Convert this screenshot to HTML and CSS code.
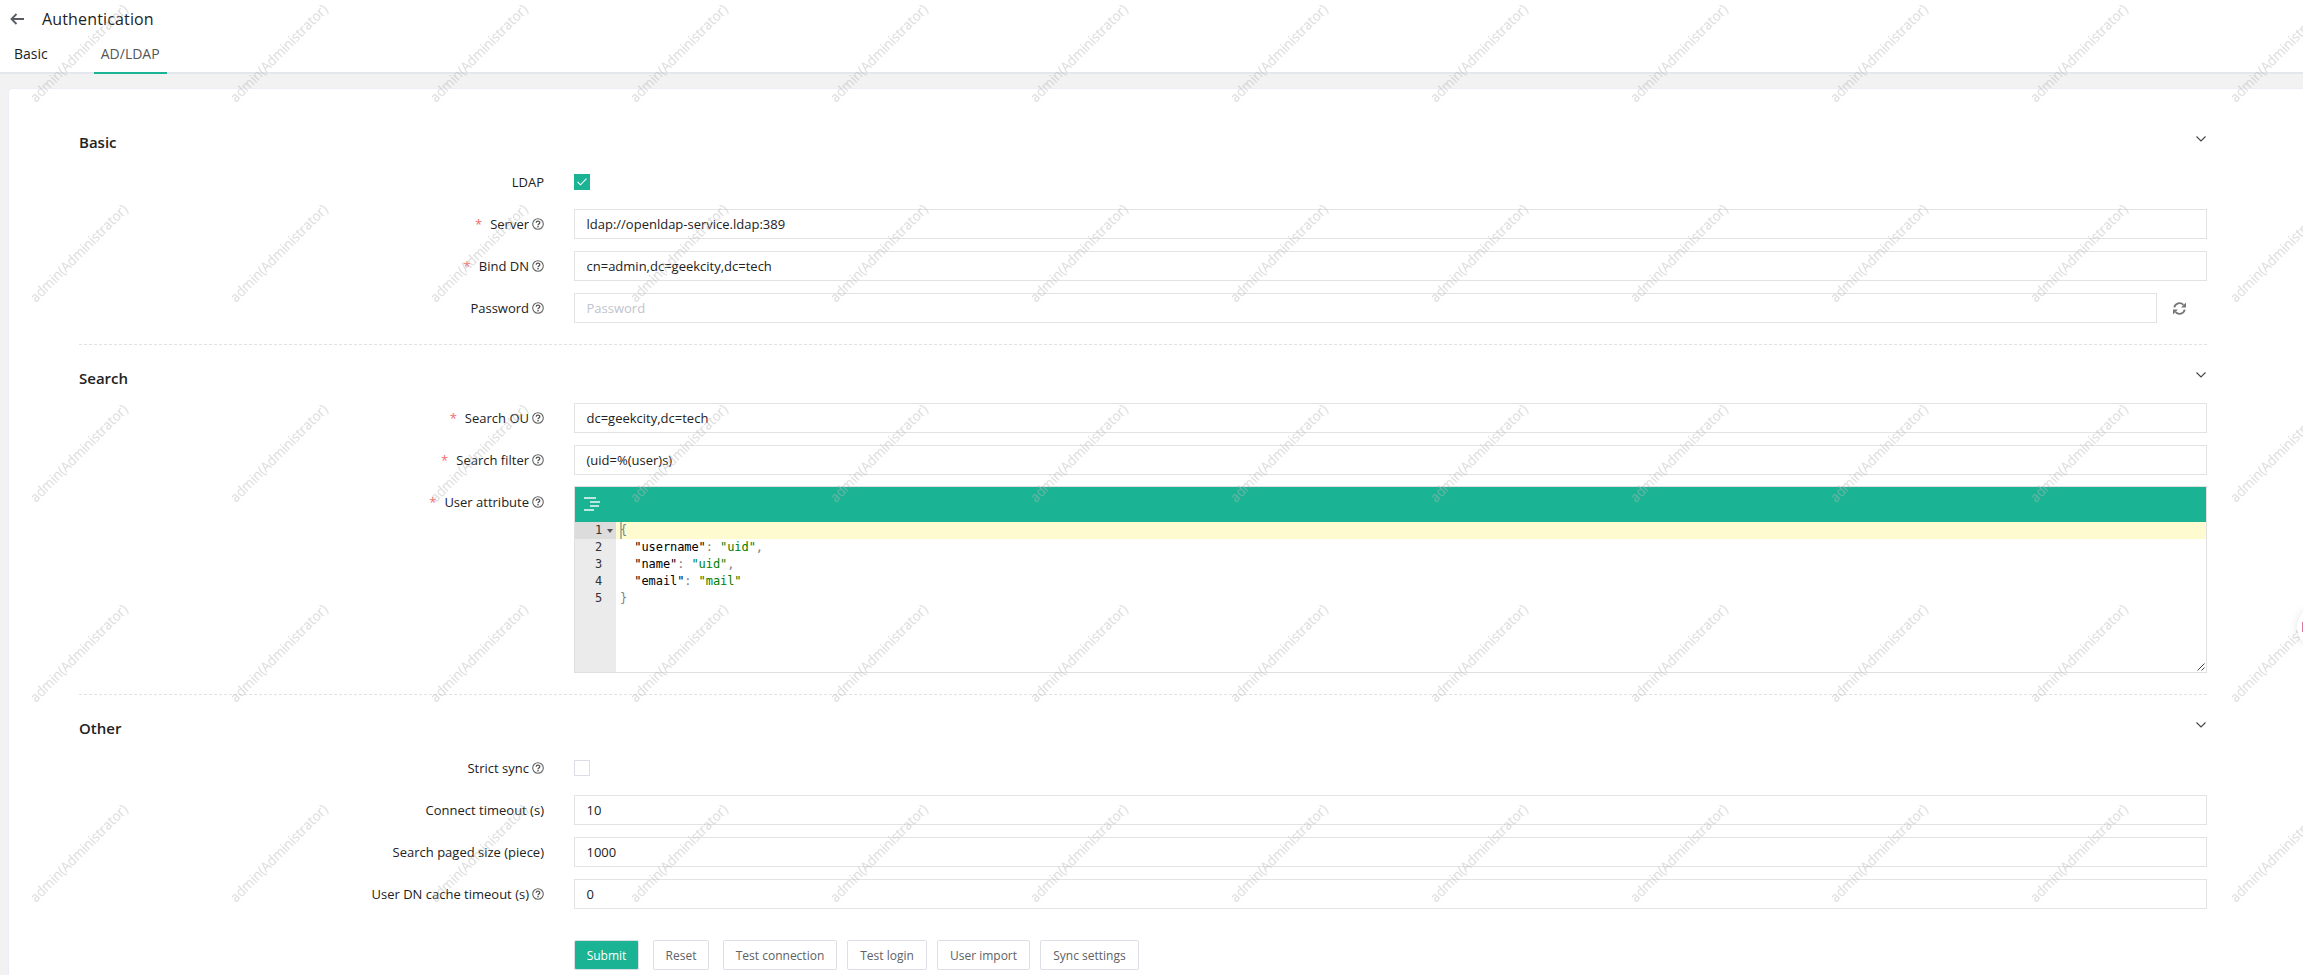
FILE: index.html
```
<!DOCTYPE html>
<html lang="en">
<head>
<meta charset="utf-8">
<title>Authentication</title>
<link rel="stylesheet" href="styles.css">
</head>
<body>
<svg class="defs" width="0" height="0">
  <symbol id="help" viewBox="0 0 12 12"><circle cx="6" cy="6" r="5.3" fill="none" stroke="#666" stroke-width="1.1"/><path d="M4.2 4.8C4.2 2.6 7.8 2.6 7.8 4.7C7.8 5.9 6 5.8 6 7.2" fill="none" stroke="#555" stroke-width="1.3"/><rect x="5.3" y="8" width="1.4" height="1.4" fill="#555"/></symbol>
  <symbol id="chevron" viewBox="0 0 10 6"><path d="M.5 .5L5 5L9.500 .5" fill="none" stroke="#444" stroke-width="1.1"/></symbol>
</svg>
<header class="header">
  <div class="title-row">
    <svg class="back" viewBox="0 0 14 12"><path d="M14 6H1.500M6.500 1L1.500 6L6.500 11" fill="none" stroke="#5a5c63" stroke-width="1.8"/></svg>
    <h1 class="title">Authentication</h1>
  </div>
  <nav class="tabs"><a class="tab">Basic</a><a class="tab active">AD/LDAP</a></nav>
</header>
<main class="card">
  <section class="section">
    <div class="section-head"><h2>Basic</h2><svg class="chev"><use href="#chevron"/></svg></div>
    <div class="row"><label>LDAP</label><span class="check on"><svg viewBox="0 0 16 16"><path d="M3.500 7.800L6.500 10.800L12.500 4.600" fill="none" stroke="#fff" stroke-width="1.100"/></svg></span></div>
    <div class="row"><label><i>*</i>Server<svg class="help"><use href="#help"/></svg></label><div class="input">ldap://openldap-service.ldap:389</div></div>
    <div class="row"><label><i>*</i>Bind DN<svg class="help"><use href="#help"/></svg></label><div class="input">cn=admin,dc=geekcity,dc=tech</div></div>
    <div class="row"><label>Password<svg class="help"><use href="#help"/></svg></label><div class="input placeholder">Password</div>
      <svg class="refresh" viewBox="0 0 13 13"><path d="M1.300 5.400A5.300 5.300 0 0 1 10.400 2.900M11.700 7.600A5.300 5.300 0 0 1 2.600 10.100" fill="none" stroke="#777" stroke-width="1.900"/><path d="M13 .5V5.400H8.100ZM0 12.500V7.600H4.900Z" fill="#777"/></svg></div>
  </section>
  <section class="section">
    <div class="section-head"><h2>Search</h2><svg class="chev"><use href="#chevron"/></svg></div>
    <div class="row"><label><i>*</i>Search OU<svg class="help"><use href="#help"/></svg></label><div class="input">dc=geekcity,dc=tech</div></div>
    <div class="row"><label><i>*</i>Search filter<svg class="help"><use href="#help"/></svg></label><div class="input">(uid=%(user)s)</div></div>
    <div class="row tall"><label><i>*</i>User attribute<svg class="help"><use href="#help"/></svg></label>
      <div class="editor">
        <div class="toolbar"><svg viewBox="0 0 16 14"><path d="M0 1H12M6 5H16M6 9H15M0 13H10" stroke="#fff" stroke-opacity=".7" stroke-width="2"/></svg></div>
        <div class="code">
          <div class="line current"><span class="num">1<svg class="fold" viewBox="0 0 6 4"><path d="M0 0H6L3 4Z" fill="#555"/></svg></span><code><b class="cursor">{</b></code></div>
          <div class="line"><span class="num">2</span><code>  <span class="key">"username"</span>: <span class="str">"uid"</span>,</code></div>
          <div class="line"><span class="num">3</span><code>  <span class="key">"name"</span>: <span class="str">"uid"</span>,</code></div>
          <div class="line"><span class="num">4</span><code>  <span class="key">"email"</span>: <span class="str">"mail"</span></code></div>
          <div class="line"><span class="num">5</span><code>}</code></div>
        </div>
        <svg class="resize" viewBox="0 0 8 8"><path d="M.5 7.500L7.500 .5M4.500 7.500L7.500 4.500" stroke="#444" stroke-width="1"/></svg>
      </div></div>
  </section>
  <section class="section">
    <div class="section-head"><h2>Other</h2><svg class="chev"><use href="#chevron"/></svg></div>
    <div class="row"><label>Strict sync<svg class="help"><use href="#help"/></svg></label><span class="check"></span></div>
    <div class="row"><label>Connect timeout (s)</label><div class="input">10</div></div>
    <div class="row"><label>Search paged size (piece)</label><div class="input">1000</div></div>
    <div class="row"><label>User DN cache timeout (s)<svg class="help"><use href="#help"/></svg></label><div class="input">0</div></div>
  </section>
  <div class="actions">
    <button class="btn primary submit">Submit</button><button class="btn reset">Reset</button><button class="btn connection">Test connection</button><button class="btn login">Test login</button><button class="btn import">User import</button><button class="btn sync">Sync settings</button>
  </div>
</main>
<svg class="watermark" width="2303" height="975">
  <defs><pattern id="wm" width="200" height="200" patternUnits="userSpaceOnUse"><text transform="translate(36 103) rotate(-45)" textLength="131" lengthAdjust="spacingAndGlyphs">admin(Administrator)</text></pattern></defs>
  <rect width="2303" height="975" fill="url(#wm)"/>
</svg>
<div class="bubble-clip"><div class="bubble"><span></span></div></div>
</body>
</html>
```
FILE: styles.css
```
* { box-sizing: border-box; }
html, body { margin: 0; height: 975px; overflow: hidden; }
body { position: relative; background: #f2f2f2; font: 13px "Open Sans", "Noto Sans", sans-serif; color: #222; }
.defs { position: absolute; }
h1, h2 { margin: 0; }
.header { height: 74px; background: #fff; border-bottom: 2px solid #e4e7ed; }
.title-row { display: flex; align-items: center; height: 38px; padding-left: 10px; }
.back { width: 14px; height: 12px; }
.title { margin-left: 18px; font-size: 16px; font-weight: 400; letter-spacing: .15px; }
.tabs { display: flex; height: 36px; }
.tab { height: 36px; line-height: 32px; padding: 0 6px; font-size: 14px; }
.tab:first-child { margin-left: 8px; margin-right: 40px; }
.tabs .active { width: 73px; padding-left: 7px; color: #555; border-bottom: 2px solid #1ab394; }
.card { height: 900px; margin: 14px 0 0 8px; padding: 20px 96px 0 70px; background: #fff; border: 1px solid #ebeef5; border-right: 0; border-radius: 4px 0 0 0; }
.section { padding-bottom: 21px; border-bottom: 1px dashed #e2e2e2; }
.section:nth-of-type(3) { border-bottom: 0; }
.section-head { display: flex; justify-content: space-between; height: 58px; padding-top: 21px; }
.section-head h2 { font-size: 15px; line-height: 24px; font-weight: 600; }
.chev { width: 10px; height: 6px; margin: 6px 1px 0 0; }
.row { display: flex; align-items: center; height: 30px; margin-top: 12px; }
.section-head + .row { margin-top: 0; }
label { flex: 0 0 465px; margin-right: 30px; display: flex; justify-content: flex-end; align-items: center; line-height: 30px; }
label i { color: #f56c6c; font-style: normal; margin-right: 8px; }
.help { width: 12px; height: 12px; margin-left: 3px; }
.input { flex: 1; height: 30px; line-height: 28px; padding-left: 11.5px; border: 1px solid #e3e3e3; }
.placeholder { color: #c0c4cc; }
.refresh { width: 13px; height: 13px; margin: 0 21px 0 16px; }
.check { width: 16px; height: 16px; border: 1px solid #dcdfe6; }
.on { background: #1ab394; border: 0; }
.on svg { display: block; width: 16px; height: 16px; }
.tall { height: 187px; margin-top: 11px; align-items: flex-start; }
.tall label { margin-top: 1px; }
.section .editor { position: relative; flex: 1; height: 187px; border: 1px solid #e0e0e0; }
.toolbar { height: 35px; padding: 10px 9px; background: #1ab394; }
.toolbar svg { display: block; width: 16px; height: 14px; }
.code { height: 150px; background: linear-gradient(90deg, #ebebeb 41px, #fff 41px); }
.line { display: flex; height: 17px; font: 12px/17px "DejaVu Sans Mono", monospace; letter-spacing: -.08px; }
.num { position: relative; width: 41px; padding-left: 20px; color: #333; }
.fold { position: absolute; left: 32px; top: 7px; width: 6px; height: 4px; }
.line code { flex: 1; padding-left: 4px; font: inherit; white-space: pre; color: #808080; }
.current .num { background: #dcdcdc; }
.current code { background: #fffbd1; }
.cursor { display: inline-block; font-weight: 400; box-shadow: inset 2px 0 #b8b49a; }
.key { color: #000; }
.str { color: #008000; }
.resize { position: absolute; right: 1px; bottom: 1px; width: 8px; height: 8px; }
.actions { display: flex; gap: 10px; padding: 10px 0 0 495px; }
.btn { height: 30px; padding: 0; border: 1px solid #dcdfe6; border-radius: 2px; background: #fff; color: #606266; font: 12px "Open Sans", sans-serif; }
.primary { background: #1ab394; color: #fff; }
.submit { width: 65px; margin-right: 4px; }
.reset { width: 56px; margin-right: 4px; }
.connection { width: 114px; }
.login { width: 80px; }
.import { width: 93px; }
.sync { width: 99px; }
.bubble-clip { position: absolute; right: 0; top: 590px; width: 20px; height: 80px; overflow: hidden; }
.bubble { position: absolute; left: 14px; top: 17px; width: 40px; height: 40px; border-radius: 50%; background: #fff; box-shadow: 0 0 8px rgba(0, 0, 0, .1); }
.bubble span { position: absolute; left: 5px; top: 15px; width: 4px; height: 10px; background: #d87c9c; }
.watermark { position: absolute; left: 0; top: 0; pointer-events: none; }
.watermark text { font: 14px "Open Sans", sans-serif; fill: #b4b4b4; fill-opacity: .42; stroke: #b4b4b4; stroke-opacity: .2; stroke-width: .3px; }
```
